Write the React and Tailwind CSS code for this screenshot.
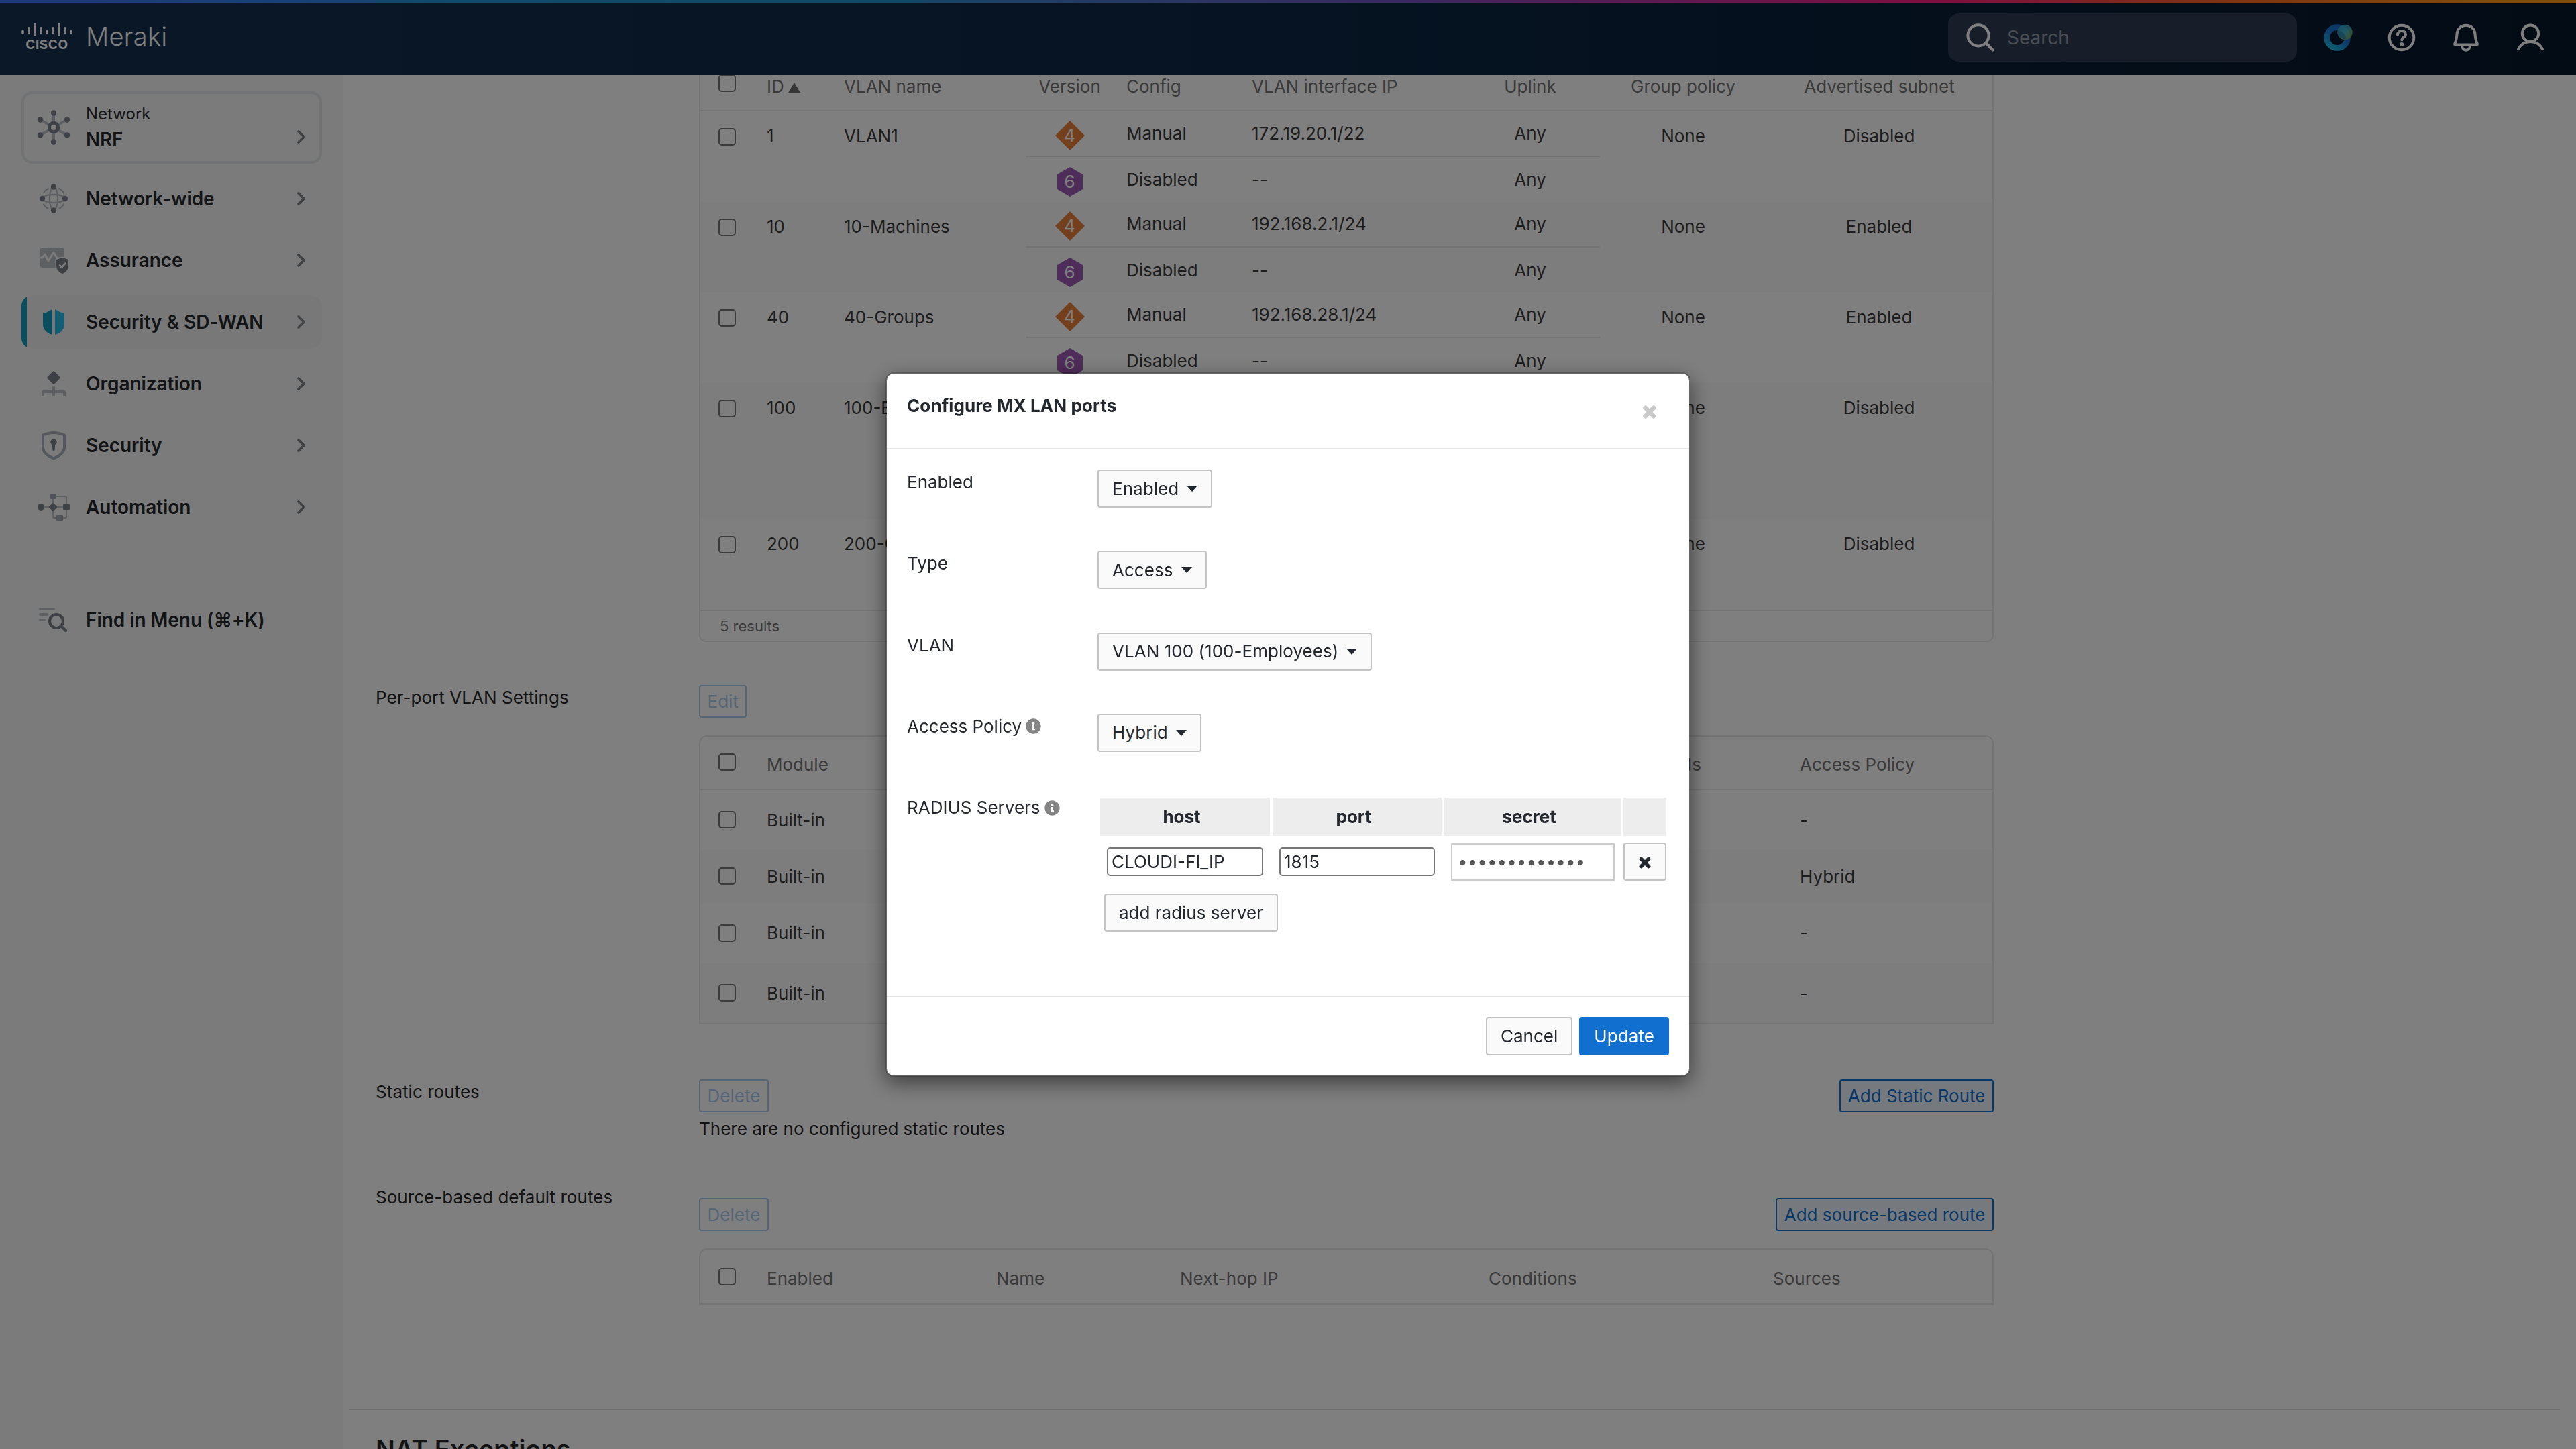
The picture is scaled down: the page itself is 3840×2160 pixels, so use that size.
import React from "react";
import { FaInfoCircle } from "react-icons/fa";
import clsx from "clsx";

const vlans = [
  {
    id: "1",
    name: "VLAN1",
    ip: "172.19.20.1/22",
    subnet: "Disabled",
    height: "h-[135px]",
  },
  {
    id: "10",
    name: "10-Machines",
    ip: "192.168.2.1/24",
    subnet: "Enabled",
    height: "h-[135px]",
  },
  {
    id: "40",
    name: "40-Groups",
    ip: "192.168.28.1/24",
    subnet: "Enabled",
    height: "h-[135px]",
  },
  {
    id: "100",
    name: "100-Employees",
    subnet: "Disabled",
    height: "h-[203px]",
  },
  {
    id: "200",
    name: "200-Guests",
    subnet: "Disabled",
    height: "h-[135px]",
  },
];

const ports = [
  { module: "Built-in", policy: "-", height: "h-[89px]" },
  { module: "Built-in", policy: "Hybrid", height: "h-[79px]" },
  { module: "Built-in", policy: "-", height: "h-[90px]" },
  { module: "Built-in", policy: "-", height: "h-[89px]" },
];

const DARK = "#7a808a";
const LIGHT = "#b9c0c6";

/* ---------- sidebar icons, drawn on a 48px canvas centred on 0,0 ---------- */

const Glyph = ({ children }) => (
  <svg
    viewBox="-24 -24 48 48"
    className="w-12 h-12 shrink-0 overflow-visible"
    fill="none"
    strokeLinecap="round"
    strokeLinejoin="round"
  >
    {children}
  </svg>
);

const HubIcon = () => (
  <Glyph>
    <path
      d="M0-20V-8M0 8V20M-19-11L-7-4M7 4L19 11M-19 11L-7 4M7-4L19-11"
      stroke={LIGHT}
      strokeWidth="4"
    />
    <circle r="6.6" stroke={DARK} strokeWidth="5.2" />
    <g fill={DARK}>
      <circle cy="-21.5" r="4.2" />
      <circle cy="21.5" r="4.2" />
      <circle cx="-20" cy="-11.5" r="4.2" />
      <circle cx="20" cy="-11.5" r="4.2" />
      <circle cx="-20" cy="11.5" r="4.2" />
      <circle cx="20" cy="11.5" r="4.2" />
    </g>
  </Glyph>
);

const GlobeIcon = () => (
  <Glyph>
    <g stroke={LIGHT} strokeWidth="2.4">
      <path d="M-3-16C-7-6-7 6-3 16M3-16C7-6 7 6 3 16" />
      <path d="M-16-3C-6-7 6-7 16-3M-16 3C-6 7 6 7 16 3" />
      <path d="M-15-8.5A17 17 0 0 1-8.5-15M8.5-15A17 17 0 0 1 15-8.5M15 8.5A17 17 0 0 1 8.5 15M-8.5 15A17 17 0 0 1-15 8.5" />
    </g>
    <g fill={DARK}>
      <circle cy="-17.5" r="4.2" />
      <circle cy="17.5" r="4.2" />
      <circle cx="-17" r="4.2" />
      <circle cx="17" r="4.2" />
    </g>
  </Glyph>
);

const AssuranceIcon = () => (
  <Glyph>
    <rect x="-20" y="-19" width="36" height="30" rx="3" fill={LIGHT} />
    <path
      d="M-21-4H-17L-13-9L-8 1L0-12L5-3H17"
      stroke="#f7f7f7"
      strokeWidth="3"
    />
    <path
      d="M13-4L22-1V8C22 14 18 18 13 20C8 18 4 14 4 8V-1Z"
      fill={DARK}
      stroke="#f7f7f7"
      strokeWidth="3"
      paintOrder="stroke"
    />
    <path d="M9 7.5L12 10.5L17.5 4.5" stroke="#f7f7f7" strokeWidth="2.6" />
  </Glyph>
);

const ShieldHalvesIcon = () => (
  <Glyph>
    <path d="M-2-18.5V19C-10 17-16 11-16 4V-13C-11-14-7-16-4-18.3Z" fill="#129cbe" />
    <path d="M2-18.5V19C10 17 16 11 16 4V-13C11-14 7-16 4-18.3Z" fill="#26bce4" />
  </Glyph>
);

const OrgIcon = () => (
  <Glyph>
    <path
      d="M0-17L8-9L0-1L-8-9Z"
      fill={DARK}
      stroke={DARK}
      strokeWidth="3.4"
    />
    <path d="M-16 17V12H16V17M0 6V17" stroke={LIGHT} strokeWidth="4" />
  </Glyph>
);

const LockShieldIcon = () => (
  <Glyph>
    <path
      d="M0-19C5-19 10-18 16-15.5V3C16 11 8 16 0 19.5C-8 16-16 11-16 3V-15.5C-10-18-5-19 0-19Z"
      stroke="#a9b0b8"
      strokeWidth="4"
    />
    <circle cy="-5" r="4.7" fill={DARK} />
    <path d="M0-4V6" stroke={DARK} strokeWidth="4" />
  </Glyph>
);

const FlowIcon = () => (
  <Glyph>
    <path
      d="M-19 0H19M-1-16H17Q19-16 19-14V14Q19 16 17 16H1Q-1 16-1 14V-16"
      stroke={LIGHT}
      strokeWidth="2.2"
    />
    <circle cx="-19" r="5" fill={DARK} />
    <path d="M-1-6.5L5.5 0L-1 6.5L-7.5 0Z" fill={DARK} />
    <rect x="-6" y="-20" width="10" height="8" rx="1.2" fill="#a0a7af" />
    <rect x="14" y="-4" width="10" height="8" rx="1.2" fill={DARK} />
    <rect x="4" y="12" width="10" height="8" rx="1.2" fill="#a0a7af" />
  </Glyph>
);

const FindIcon = () => (
  <Glyph>
    <path d="M-20-16H0M-20-8H-9.5M-20 0H-14" stroke={LIGHT} strokeWidth="4" />
    <circle cx="4" cy="2" r="10" stroke={DARK} strokeWidth="4.2" />
    <path d="M11.5 9.5L18 16" stroke={DARK} strokeWidth="4.4" />
  </Glyph>
);

const Chevron = () => (
  <svg
    viewBox="0 0 12 20"
    className="w-3 h-5 shrink-0"
    fill="none"
    stroke="#7f858d"
    strokeWidth="3.8"
    strokeLinecap="round"
    strokeLinejoin="round"
  >
    <path d="M2 2L10 10L2 18" />
  </svg>
);

const Cross = ({ className }) => (
  <svg viewBox="0 0 1792 1792" className={className} fill="currentColor">
    <path d="M1490 1322q0 40-28 68l-136 136q-28 28-68 28t-68-28l-294-294-294 294q-28 28-68 28t-68-28l-136-136q-28-28-28-68t28-68l294-294-294-294q-28-28-28-68t28-68l136-136q28-28 68-28t68 28l294 294 294-294q28-28 68-28t68 28l136 136q28 28 28 68t-28 68l-294 294 294 294q28 28 28 68z" />
  </svg>
);

/* ---------- top bar ---------- */

const CiscoLogo = () => {
  const bars = [6.5, 11, 20, 11, 6.5, 11, 20, 11, 6.5];
  return (
    <div className="mb-[5px] flex flex-col items-center w-[76px]">
      <svg viewBox="0 0 76 20" className="w-[76px] h-5" fill="white">
        {bars.map((h, i) => (
          <rect
            key={i}
            x={0.3 + i * 9}
            y={h === 20 ? 0 : 17 - h}
            width="3.4"
            height={h}
            rx="1.7"
          />
        ))}
      </svg>
      <span className="mt-[3px] text-[19px] leading-[20px] font-bold tracking-[0.6px] text-white">
        CISCO
      </span>
    </div>
  );
};

const Header = () => (
  <header className="h-28 shrink-0 flex flex-col bg-linear-to-r from-[#15304f] via-[#0b2745] to-[#07172a]">
    <div className="h-1 bg-[linear-gradient(90deg,#3d72f2_0%,#2c93dc_18%,#2a8fd0_35%,#7a4fc4_55%,#ff1c80_75%,#ff6a24_87%,#ff9a18_97%)]" />
    <div className="flex-1 flex items-center pl-8 pr-11">
      <CiscoLogo />
      <span className="ml-5 mb-2 w-[130px] text-[38px] leading-none font-light tracking-[0.3px] text-white">
        Meraki
      </span>

      <div className="ml-auto mb-1 h-[72px] w-[520px] rounded-2xl bg-[#2e3d52] flex items-center pl-6">
        <svg
          viewBox="0 0 48 48"
          className="w-12 h-12"
          fill="none"
          stroke="white"
          strokeWidth="4"
          strokeLinecap="round"
        >
          <circle cx="21" cy="20.8" r="15.6" />
          <path d="M32.5 32L42.5 42.5" />
        </svg>
        <span className="ml-4 text-[28px] leading-none text-[#959ca8]">
          Search
        </span>
      </div>

      <div className="ml-9 mb-1 flex gap-12">
        <svg viewBox="0 0 48 48" className="w-12 h-12" fill="none">
          <defs>
            <linearGradient id="ring" x1="0.8" y1="0" x2="0.2" y2="1">
              <stop offset="0" stopColor="#1a68c4" />
              <stop offset="0.5" stopColor="#1a7ad8" />
              <stop offset="1" stopColor="#1cb8e0" />
            </linearGradient>
            <linearGradient id="drop" x1="0" y1="0" x2="0.7" y2="1">
              <stop offset="0" stopColor="#2aa6d4" />
              <stop offset="0.55" stopColor="#4fc4d0" />
              <stop offset="1" stopColor="#8fb84a" />
            </linearGradient>
          </defs>
          <circle cx="24" cy="24" r="15.3" stroke="url(#ring)" strokeWidth="8.8" />
          <circle cx="35.4" cy="16" r="11.2" fill="url(#drop)" fillOpacity="0.8" />
          <path
            d="M25.5 13.5A15 15 0 0 1 38 26.4A11 11 0 0 1 25.5 13.5Z"
            fill="#1a6fc0"
            fillOpacity="0.45"
          />
        </svg>
        <svg
          viewBox="0 0 48 48"
          className="w-12 h-12"
          fill="none"
          stroke="white"
          strokeWidth="4"
          strokeLinecap="round"
        >
          <circle cx="24" cy="24" r="18.3" />
          <path d="M18 19.8C18 16 20.6 14 24 14C27.6 14 30 16.4 30 19.3C30 23.4 24.4 23.4 24.4 27.4" />
          <circle cx="24.2" cy="34" r="3" fill="white" stroke="none" />
        </svg>
        <svg
          viewBox="0 0 48 48"
          className="w-12 h-12"
          fill="none"
          stroke="white"
          strokeWidth="4"
          strokeLinejoin="round"
        >
          <path d="M24 5.8C16.5 5.8 11.3 11 10.6 18C10.2 24 9.6 28 7.2 33.4Q7 34.4 8 34.4H40Q41 34.4 40.8 33.4C38.4 28 37.8 24 37.4 18C36.7 11 31.5 5.8 24 5.8Z" />
          <path d="M18 35.5C18 45 30 45 30 35.5" />
        </svg>
        <svg
          viewBox="0 0 48 48"
          className="w-12 h-12"
          fill="none"
          stroke="white"
          strokeWidth="4"
          strokeLinecap="round"
        >
          <circle cx="24" cy="17.8" r="12.2" />
          <path d="M6 41.2C9.5 34.5 16 30 24 30C32 30 38.5 34.5 42 41.2" />
        </svg>
      </div>
    </div>
  </header>
);

/* ---------- side navigation ---------- */

const nav = [
  { label: "Network-wide", icon: <GlobeIcon /> },
  { label: "Assurance", icon: <AssuranceIcon /> },
  { label: "Security & SD-WAN", icon: <ShieldHalvesIcon />, active: true },
  { label: "Organization", icon: <OrgIcon /> },
  { label: "Security", icon: <LockShieldIcon /> },
  { label: "Automation", icon: <FlowIcon /> },
];

const NavItem = ({ label, icon, active }) => (
  <div
    className={clsx(
      "h-20 flex items-center pr-[25px] rounded-2xl overflow-hidden",
      active && "bg-[#f0f0f0]"
    )}
  >
    <span className={clsx("w-2 h-full mr-4", active && "bg-[#129cbe]")} />
    {icon}
    <span className="ml-6 flex-1 text-[28px] leading-none font-semibold text-[#25282d] tracking-[-0.05px]">
      {label}
    </span>
    <Chevron />
  </div>
);

const Sidebar = () => (
  <aside className="w-[512px] shrink-0 bg-[#f7f7f7] pt-6 px-8">
    <div className="h-[108px] border-4 border-[#e3e5e7] rounded-2xl flex items-center pl-5 pr-[21px]">
      <HubIcon />
      <div className="ml-6 flex-1 flex flex-col text-[#25282d]">
        <span className="mt-px text-[24px] leading-[32px]">Network</span>
        <span className="mt-[3px] text-[28px] leading-[38px] font-semibold tracking-[-0.3px]">
          NRF
        </span>
      </div>
      <span className="mt-7">
        <Chevron />
      </span>
    </div>

    <nav className="mt-3 flex flex-col gap-3">
      {nav.map((item) => (
        <NavItem key={item.label} {...item} />
      ))}
    </nav>

    <div className="mt-[88px] h-20 flex items-center pl-6">
      <FindIcon />
      <span className="ml-6 text-[28px] leading-none font-semibold text-[#25282d] tracking-[-0.05px]">
        Find in Menu (⌘+K)
      </span>
    </div>
  </aside>
);

/* ---------- page content ---------- */

const Checkbox = ({ className }) => (
  <span
    className={clsx(
      "block w-[26px] h-[26px] border-2 border-[#767676] rounded-[5px]",
      className
    )}
  />
);

const LinkButton = ({ children, disabled }) => (
  <button
    className={clsx(
      "h-[49px] px-[10.5px] border-2 rounded-[4px] text-[26px] leading-none",
      disabled
        ? "border-[#abcaec] text-[#abcaec]"
        : "border-[#1170cf] text-[#1170cf] bg-[#edf5fc]"
    )}
  >
    {children}
  </button>
);

const Version = ({ six }) => (
  <span className="relative w-11 h-11 flex items-center justify-center text-[26px] leading-none text-white">
    <svg viewBox="0 0 44 44" className="absolute inset-0 w-11 h-11">
      {six ? (
        <path d="M22 0L41 11V33L22 44L3 33V11Z" fill="#9e5ab4" />
      ) : (
        <path d="M22 0L44 22L22 44L0 22Z" fill="#e87e3a" />
      )}
    </svg>
    <span className="relative">{six ? "6" : "4"}</span>
  </span>
);

const SubRow = ({ six, config, ip }) => (
  <div
    className={clsx(
      "grid grid-cols-[131px_206px_311px_208px] items-center",
      six ? "h-[67px] pt-px" : "h-[68px] border-b-2 border-[#e8e8e8]"
    )}
  >
    <span className="flex justify-center pt-[5px]">
      <Version six={six} />
    </span>
    <span className="pl-[19px]">{config}</span>
    <span>{ip}</span>
    <span className="text-center">Any</span>
  </div>
);

const VlanTable = () => (
  <div className="-mt-[22px] border-2 border-t-0 border-[#e8e8e8] rounded-b-[10px] text-[26px] text-[#3a3a3a] overflow-hidden">
    <div className="h-[76px] pt-[3px] border-b-2 border-[#e8e8e8] grid grid-cols-[99px_115px_271px_131px_206px_311px_208px_248px_1fr] items-center text-[#757575] leading-none">
      <Checkbox className="ml-[27px] -mt-[9px]" />
      <span className="flex items-center gap-[6px]">
        ID
        <svg viewBox="0 0 18 15" className="w-[18px] h-[15px] mt-1" fill="#6a6a6a">
          <path d="M9 0L18 15H0Z" />
        </svg>
      </span>
      <span>VLAN name</span>
      <span className="text-center">Version</span>
      <span className="pl-[19px]">Config</span>
      <span>VLAN interface IP</span>
      <span className="text-center">Uplink</span>
      <span className="text-center">Group policy</span>
      <span className="text-center">Advertised subnet</span>
    </div>

    {vlans.map((vlan, i) => (
      <div
        key={vlan.id}
        className={clsx(
          "grid grid-cols-[99px_115px_271px_856px_248px_1fr] items-start leading-[36px]",
          vlan.height,
          i % 2 === 1 && "bg-[#fbfbfb]"
        )}
      >
        <Checkbox className="ml-[27px] mt-[25px]" />
        <span className="pt-[19px]">{vlan.id}</span>
        <span className="pt-[19px]">{vlan.name}</span>
        <div>
          {vlan.ip && (
            <>
              <SubRow config="Manual" ip={vlan.ip} />
              <SubRow six config="Disabled" ip="--" />
            </>
          )}
        </div>
        <span className="pt-[19px] text-center">None</span>
        <span className="pt-[19px] pr-px text-center">{vlan.subnet}</span>
      </div>
    ))}

    <div className="h-[46px] border-t-2 border-[#e8e8e8] flex items-center pl-[29px] text-[22px] leading-none text-[#757575]">
      5 results
    </div>
  </div>
);

const PortTable = () => (
  <div className="mt-[26px] border-2 border-[#e8e8e8] rounded-t-[12px] text-[26px] leading-none text-[#3a3a3a] overflow-hidden">
    <div className="h-20 pt-[6px] border-b-2 border-[#e8e8e8] grid grid-cols-[99px_1fr_auto_287px] items-center text-[#757575]">
      <Checkbox className="ml-[27px] -mt-[8px]" />
      <span>Module</span>
      <span className="pr-[147px]">Allowed VLANs</span>
      <span>Access Policy</span>
    </div>
    {ports.map((port, i) => (
      <div
        key={i}
        className={clsx(
          "grid grid-cols-[99px_1fr_287px] items-center",
          port.height,
          i % 2 === 1 && "bg-[#fafafa]"
        )}
      >
        <Checkbox className="ml-[27px] -mt-px" />
        <span>{port.module}</span>
        <span>{port.policy}</span>
      </div>
    ))}
  </div>
);

const Section = ({ label, className, children }) => (
  <section className={clsx("flex pl-12", className)}>
    <div className="w-[482px] shrink-0 text-[26px] leading-[38px] tracking-[0.04px] text-[#262626]">
      {label}
    </div>
    <div className="w-[1930px]">{children}</div>
  </section>
);

const Content = () => (
  <main className="flex-1 overflow-hidden bg-white">
    <Section>
      <VlanTable />
    </Section>

    <Section label="Per-port VLAN Settings" className="pt-16">
      <div className="flex">
        <LinkButton disabled>Edit</LinkButton>
      </div>
      <PortTable />
    </Section>

    <Section label="Static routes" className="pt-[82px]">
      <div className="flex justify-between">
        <LinkButton disabled>Delete</LinkButton>
        <LinkButton>Add Static Route</LinkButton>
      </div>
      <p className="mt-[6px] text-[26px] leading-[38px] text-[#262626]">
        There are no configured static routes
      </p>
    </Section>

    <Section label="Source-based default routes" className="pt-16">
      <div className="mt-5 flex justify-between">
        <LinkButton disabled>Delete</LinkButton>
        <LinkButton>Add source-based route</LinkButton>
      </div>
      <div className="mt-[26px] h-[85px] border-2 border-b-4 border-[#e8e8e8] rounded-t-[12px] pt-[7px] grid grid-cols-[99px_342px_274px_460px_424px_1fr] items-center text-[26px] leading-none text-[#757575]">
        <Checkbox className="ml-[27px] -mt-[7px]" />
        <span>Enabled</span>
        <span>Name</span>
        <span>Next-hop IP</span>
        <span>Conditions</span>
        <span>Sources</span>
      </div>
    </Section>

    <hr className="mt-[154px] ml-2 mr-6 border-t-2 border-[#dedede]" />
    <h2 className="mt-[35px] pl-12 text-[38px] leading-[46px] font-semibold text-[#262626]">
      NAT Exceptions
    </h2>
  </main>
);

/* ---------- modal ---------- */

const Button = ({ children, primary, className }) => (
  <button
    className={clsx(
      "h-[57px] px-5 border-2 rounded-[4px] text-[26px] leading-none flex items-center",
      primary
        ? "bg-[#1170cf] border-[#1170cf] text-white"
        : "bg-[#fafafa] border-[#c4c4c4] text-[#23282e]",
      className
    )}
  >
    {children}
  </button>
);

const Dropdown = ({ value }) => (
  <Button className="gap-3 tracking-[0.04px]">
    {value}
    <svg viewBox="0 0 16 9" className="w-4 h-[9px]" fill="#23282e">
      <path d="M0 0H16L8 9Z" />
    </svg>
  </Button>
);

const Field = ({ label, info, children }) => (
  <div className="h-[121.3px] pt-[30px] flex items-start">
    <div className="w-[284px] shrink-0 flex items-center gap-[6px] text-[26px] leading-[38px]">
      {label}
      {info && <FaInfoCircle className="w-[23px] h-[23px] text-[#858585]" />}
    </div>
    {children}
  </div>
);

const ConfigureModal = () => (
  <div className="w-[1200px] h-[1050px] flex flex-col rounded-[12px] border-2 border-black/20 bg-white bg-clip-padding shadow-[0_10px_30px_rgba(0,0,0,0.5)] text-[#23282e]">
    <div className="h-[113px] border-b-2 border-[#e5e5e5] flex items-start justify-between pl-[30px] pr-[44px] pt-[30px]">
      <h3 className="text-[26px] leading-[36px] font-bold tracking-[0.1px]">
        Configure MX LAN ports
      </h3>
      <Cross className="mt-[11px] w-[30px] h-[30px] text-[#c9c9c9]" />
    </div>

    <div className="flex-1 pl-[30px]">
      <Field label="Enabled">
        <Dropdown value="Enabled" />
      </Field>
      <Field label="Type">
        <Dropdown value="Access" />
      </Field>
      <Field label="VLAN">
        <Dropdown value="VLAN 100 (100-Employees)" />
      </Field>
      <Field label="Access Policy" info>
        <Dropdown value="Hybrid" />
      </Field>
      <Field label="RADIUS Servers" info>
        <div className="pt-1 pl-1 text-[26px] leading-none">
          <div className="grid grid-cols-[253px_252px_263px_64px] gap-1 h-[57px] font-bold text-center [&>span]:bg-[#ededed] [&>span]:pr-[10px] [&>span]:flex [&>span]:items-center [&>span]:justify-center">
            <span>host</span>
            <span>port</span>
            <span>secret</span>
            <span />
          </div>
          <div className="mt-[10px] pl-[10px] flex items-center">
            <input
              readOnly
              defaultValue="CLOUDI-FI_IP"
              className="w-[233px] h-[43px] px-[5px] border-2 border-[#767676] rounded-[5px]"
            />
            <input
              readOnly
              defaultValue="1815"
              className="ml-6 w-[232px] h-[43px] px-[5px] border-2 border-[#767676] rounded-[5px]"
            />
            <input
              readOnly
              type="password"
              defaultValue="radius-secret"
              className="ml-6 w-[244px] h-[56px] px-2 border-2 border-[#ccc] text-[#555]"
            />
            <Button className="ml-[13px] w-16 px-0! justify-center">
              <Cross className="w-[26px] h-[26px]" />
            </Button>
          </div>
          <Button className="mt-[19px] ml-[6px]">add radius server</Button>
        </div>
      </Field>
    </div>

    <div className="h-[119px] border-t-2 border-[#e5e5e5] flex justify-end items-start gap-[10px] pt-[30px] pr-[30px]">
      <Button>Cancel</Button>
      <Button primary className="tracking-[0.1px]">
        Update
      </Button>
    </div>
  </div>
);

export default function App() {
  return (
    <div className="w-[3840px] h-[2160px] overflow-hidden flex flex-col font-['Inter',sans-serif]">
      <Header />
      <div className="flex-1 min-h-0 flex">
        <Sidebar />
        <Content />
      </div>

      <div className="fixed inset-0 bg-black/50 flex items-center justify-center">
        <ConfigureModal />
      </div>
    </div>
  );
}
